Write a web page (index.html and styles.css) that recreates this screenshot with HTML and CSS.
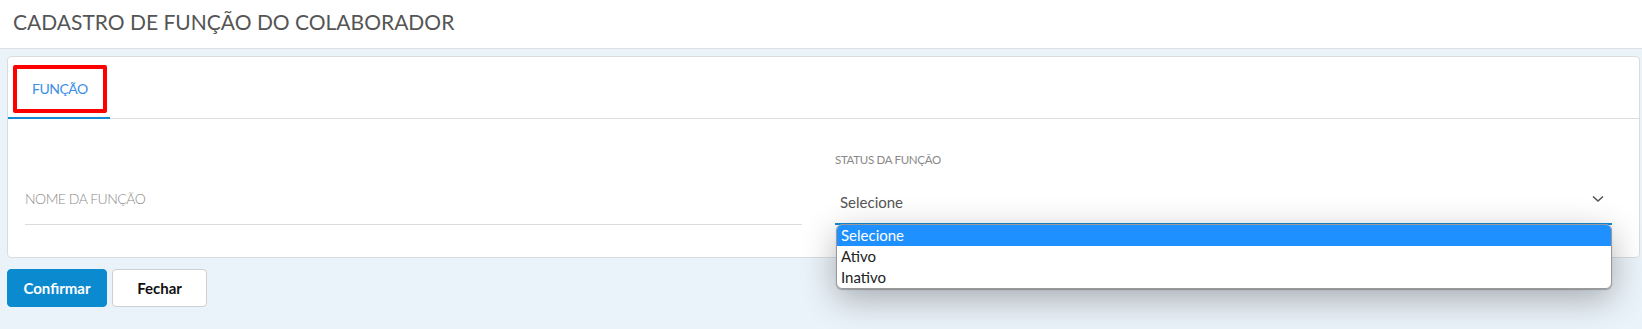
FILE: index.html
```html
<!DOCTYPE html>
<html lang="pt-BR">
<head>
    <meta charset="UTF-8">
    <meta name="viewport" content="width=device-width, initial-scale=1.0">
    <title>Cadastro de Função do Colaborador</title>
    <link rel="stylesheet" href="styles.css">
</head>
<body>
    <div class="page-header">
        <h1>CADASTRO DE FUNÇÃO DO COLABORADOR</h1>
    </div>

    <div class="content">
        <div class="card">
            <ul class="tabs">
                <li class="tab active">
                    <a href="#funcao"><span class="tab-mark">FUNÇÃO</span></a>
                </li>
            </ul>

            <div class="tab-body" id="funcao">
                <div class="field">
                    <input type="text" class="line-input" placeholder="NOME DA FUNÇÃO">
                </div>

                <div class="field">
                    <label class="field-label">STATUS DA FUNÇÃO</label>
                    <div class="select open">
                        <span class="select-value">Selecione</span>
                        <svg class="chevron" width="12" height="8" viewBox="0 0 12 8">
                            <path d="M1 1.5 L6 6 L11 1.5" fill="none" stroke="#555" stroke-width="1.6"/>
                        </svg>
                        <ul class="select-list">
                            <li class="selected">Selecione</li>
                            <li>Ativo</li>
                            <li>Inativo</li>
                        </ul>
                    </div>
                </div>
            </div>
        </div>

        <div class="actions">
            <button class="btn btn-primary">Confirmar</button>
            <button class="btn btn-default">Fechar</button>
        </div>
    </div>
</body>
</html>
```

FILE: styles.css
```css
body {
    font-family: Lato, 'Noto Sans', sans-serif;
    margin: 0;
    padding: 0;
    min-height: 100vh;
    background-color: #ebf3fa;
    color: #555;
}

.page-header {
    height: 49px;
    box-sizing: border-box;
    padding: 9px 13px 0;
    background-color: #fff;
    border-bottom: 1px solid #dcdfe3;
}

.page-header h1 {
    margin: 0;
    font-size: 21px;
    line-height: 26px;
    font-weight: 400;
    color: #555;
}

.content {
    padding: 7px 2px 0 7px;
}

.card {
    background-color: #fff;
    border: 1px solid #dadde0;
    border-radius: 4px;
}

.tabs {
    list-style: none;
    margin: 0;
    padding: 0;
    display: flex;
    border-bottom: 1px solid #dcdcdc;
}

.tab a {
    display: block;
    padding: 8px 3px 4px 5px;
    margin-bottom: -1px;
    border-bottom: 2px solid transparent;
    text-decoration: none;
    color: #3a8ee6;
    font-size: 14px;
    letter-spacing: -0.5px;
}

.tab.active a {
    border-bottom-color: #1189d3;
}

/* marcação vermelha do print */
.tab-mark {
    display: block;
    height: 40px;
    line-height: 40px;
    padding: 0 15px 0 15px;
    border: 4px solid #f00;
    border-radius: 2px;
}

.tab-body {
    display: grid;
    grid-template-columns: 1fr 1fr;
    column-gap: 33px;
    align-items: end;
    padding: 33px 27px 32px 17px;
}

.field-label {
    display: block;
    font-size: 11.5px;
    line-height: 15px;
    letter-spacing: -0.3px;
    color: #888;
    margin-bottom: 25px;
}

.line-input {
    display: block;
    width: 100%;
    box-sizing: border-box;
    border: none;
    border-bottom: 1px solid #dcdcdc;
    padding: 0 0 15px;
    font-family: Lato, 'Noto Sans', sans-serif;
    font-size: 14px;
    line-height: 20px;
    letter-spacing: -0.5px;
    color: #555;
    outline: none;
    background: transparent;
}

.line-input::placeholder {
    color: #8a8a8a;
    font-weight: 300;
}

.select {
    position: relative;
    display: flex;
    align-items: center;
    justify-content: space-between;
    padding: 0 8px 11px 5px;
    border-bottom: 2px solid #1189d3;
    font-size: 15px;
    line-height: 20px;
    color: #555;
}

.chevron {
    margin-top: -6px;
}

.select-list {
    position: absolute;
    top: 100%;
    left: 1px;
    right: 0;
    margin: 1px 0 0;
    padding: 0;
    list-style: none;
    background-color: #fff;
    border: 1px solid #9a9a9a;
    border-radius: 6px;
    overflow: hidden;
    box-shadow: 0 1px 1px rgba(0, 0, 0, 0.25), 0 10px 34px rgba(0, 0, 0, 0.3);
    z-index: 10;
}

.select-list li {
    height: 21px;
    line-height: 21px;
    padding-left: 4px;
    font-size: 15px;
    color: #222;
}

.select-list li.selected {
    background-color: #1e90ff;
    color: #fff;
}

.actions {
    display: flex;
    gap: 5px;
    margin-top: 11px;
}

.btn {
    height: 38px;
    border-radius: 4px;
    font-family: Lato, 'Noto Sans', sans-serif;
    font-size: 15px;
    font-weight: bold;
    cursor: pointer;
}

.btn-primary {
    width: 100px;
    background-color: #0b8ad0;
    border: 1px solid #0b8ad0;
    color: #fff;
}

.btn-default {
    width: 95px;
    background-color: #fff;
    border: 1px solid #cfcfcf;
    color: #111;
}
```
